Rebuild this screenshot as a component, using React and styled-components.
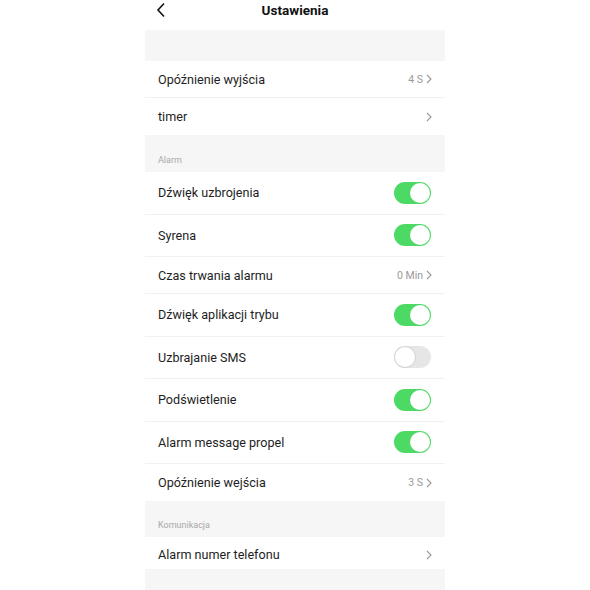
import React from 'react';
import styled, { createGlobalStyle } from 'styled-components';

const GlobalStyle = createGlobalStyle`
  html, body {
    margin: 0;
    padding: 0;
    background: #fff;
  }
  body {
    font-family: Roboto, "Noto Sans", sans-serif;
    -webkit-font-smoothing: antialiased;
  }
`;

const Screen = styled.div`
  width: 300px;
  margin: 0 auto;
  height: 590px;
  overflow: hidden;
  background: #f6f6f6;
`;

const Header = styled.div`
  height: 30px;
  display: flex;
  align-items: center;
  justify-content: center;
  position: relative;
  background: #fff;
`;

const Back = styled.svg`
  position: absolute;
  left: 11px;
  top: 2px;
`;

const Title = styled.div`
  font-size: 13.5px;
  font-weight: 700;
  color: #111;
  margin-top: -11px;
`;

const Spacer = styled.div`
  height: ${(p) => p.h}px;
`;

const SectionLabel = styled.div`
  height: ${(p) => p.h}px;
  display: flex;
  align-items: flex-end;
  padding: 0 0 7px 13px;
  box-sizing: border-box;
  font-size: 9px;
  color: #a8a8a8;
`;

const Group = styled.div`
  background: #fff;
`;

const Row = styled.div`
  height: ${(p) => p.h}px;
  display: flex;
  align-items: center;
  justify-content: space-between;
  padding: ${(p) => p.shift || 0}px 13px 0 13px;
  box-sizing: border-box;
  border-bottom: ${(p) => (p.last ? 'none' : '1px solid #f1f1f1')};
`;

const Label = styled.span`
  font-size: 12.6px;
  color: #1e1e1e;
`;

const Right = styled.span`
  display: flex;
  align-items: center;
  gap: 3px;
  font-size: 10.5px;
  color: #9a9a9a;
`;

const Toggle = styled.span`
  width: 37px;
  height: 22px;
  border-radius: 11px;
  box-sizing: border-box;
  background: ${(p) => (p.on ? '#4cd964' : '#e6e6e6')};
  display: flex;
  justify-content: ${(p) => (p.on ? 'flex-end' : 'flex-start')};
  align-items: center;
  padding: 1px;
  margin-right: 1px;

  &::after {
    content: '';
    width: 20px;
    height: 20px;
    border-radius: 50%;
    background: #fff;
    box-shadow: ${(p) => (p.on ? 'none' : '0 0 0 1px #d6d6d6')};
  }
`;

const Chevron = () => (
  <svg width="6" height="10" viewBox="0 0 6 10">
    <path d="M1 1l4 4-4 4" fill="none" stroke="#9a9a9a" strokeWidth="1.1" />
  </svg>
);

const Item = ({ label, value, toggle, h, last, shift }) => (
  <Row h={h} last={last} shift={shift}>
    <Label>{label}</Label>
    {toggle === undefined ? (
      <Right>
        {value}
        <Chevron />
      </Right>
    ) : (
      <Toggle on={toggle} />
    )}
  </Row>
);

export default function App() {
  return (
    <>
      <GlobalStyle />
      <Screen>
        <Header>
          <Back width="10" height="16" viewBox="0 0 10 16">
            <path d="M8 1.5L2 8l6 6.5" fill="none" stroke="#111" strokeWidth="1.6" />
          </Back>
          <Title>Ustawienia</Title>
        </Header>
        <Spacer h={31} />
        <Group>
          <Item label="Opóźnienie wyjścia" value="4 S" h={37} />
          <Item label="timer" h={37} last />
        </Group>
        <SectionLabel h={37}>Alarm</SectionLabel>
        <Group>
          <Item label="Dźwięk uzbrojenia" toggle={true} h={42.5} />
          <Item label="Syrena" toggle={true} h={42.5} />
          <Item label="Czas trwania alarmu" value="0 Min" h={37} />
          <Item label="Dźwięk aplikacji trybu" toggle={true} h={42.5} />
          <Item label="Uzbrajanie SMS" toggle={false} h={42.5} />
          <Item label="Podświetlenie" toggle={true} h={42.5} />
          <Item label="Alarm message propel" toggle={true} h={42.5} />
          <Item label="Opóźnienie wejścia" value="3 S" h={37} last />
        </Group>
        <SectionLabel h={36}>Komunikacja</SectionLabel>
        <Group>
          <Item label="Alarm numer telefonu" h={32} shift={3} last />
        </Group>
      </Screen>
    </>
  );
}
